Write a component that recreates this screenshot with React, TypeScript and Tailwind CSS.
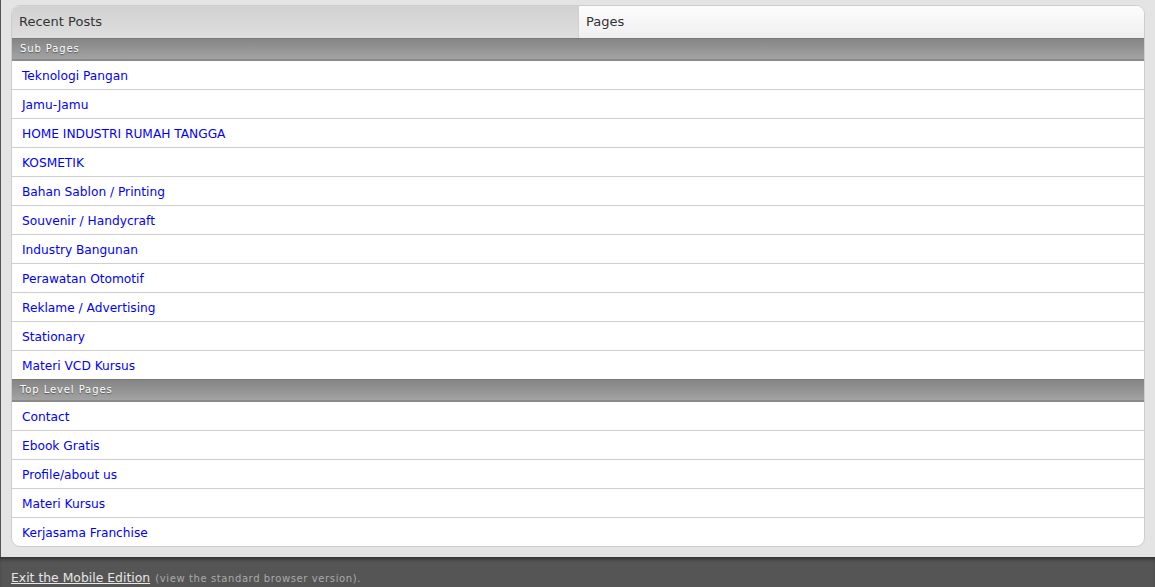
const subPages = [
  "Teknologi Pangan",
  "Jamu-Jamu",
  "HOME INDUSTRI RUMAH TANGGA",
  "KOSMETIK",
  "Bahan Sablon / Printing",
  "Souvenir / Handycraft",
  "Industry Bangunan",
  "Perawatan Otomotif",
  "Reklame / Advertising",
  "Stationary",
  "Materi VCD Kursus",
];

const topPages = ["Contact", "Ebook Gratis", "Profile/about us", "Materi Kursus", "Kerjasama Franchise"];

function SectionHeader({ title }: { title: string }) {
  return (
    <div className="h-[23px] border-t border-[#7a7a7a] border-b-2 border-b-[#8a8a8a] bg-gradient-to-b from-[#858585] to-[#a3a3a3] pl-2 text-[10px] leading-[20px] tracking-[0.9px] text-white [text-shadow:0_1px_1px_#555]">
      {title}
    </div>
  );
}

function PageRow({ label, last }: { label: string; last?: boolean }) {
  return (
    <a
      href="#"
      className={
        "block px-[10px] text-[12.2px] leading-[31px] text-[#0000ff] " +
        (last ? "h-[28px]" : "h-[29px] border-b border-[#cfcfcf]")
      }
    >
      {label}
    </a>
  );
}

export default function App() {
  return (
    <div className="flex min-h-screen flex-col bg-[#e4e4e4] font-['DejaVu_Sans',Verdana,sans-serif]">
      <div className="border-l border-[#555] px-[10px] pt-[5px] pb-[10px]">
        <div className="overflow-hidden rounded-[9px] border border-[#cdcdcd] bg-white">
          {/* tabs */}
          <div className="flex h-[32px] text-[13px] text-[#333]">
            <div className="flex w-[567px] items-center border-r border-[#d0d0d0] bg-gradient-to-b from-[#d2d2d2] to-[#dedede] pl-[7px]">
              Recent Posts
            </div>
            <div className="flex flex-1 items-center bg-gradient-to-b from-[#fdfdfd] to-[#efefef] pl-[7px]">
              Pages
            </div>
          </div>

          <SectionHeader title="Sub Pages" />
          {subPages.map((p, i) => (
            <PageRow key={p} label={p} last={i === subPages.length - 1} />
          ))}

          <SectionHeader title="Top Level Pages" />
          {topPages.map((p, i) => (
            <PageRow key={p} label={p} last={i === topPages.length - 1} />
          ))}
        </div>
      </div>

      <div className="flex-1 bg-[#555] pl-[11px] pt-[8px] shadow-[inset_0_4px_4px_-2px_rgba(0,0,0,0.45)]">
        <a href="#" className="text-[12.4px] text-[#e6e6e6] underline">
          Exit the Mobile Edition
        </a>{" "}
        <span className="text-[10px] tracking-[0.6px] text-[#aaa]">(view the standard browser version).</span>
      </div>
    </div>
  );
}
